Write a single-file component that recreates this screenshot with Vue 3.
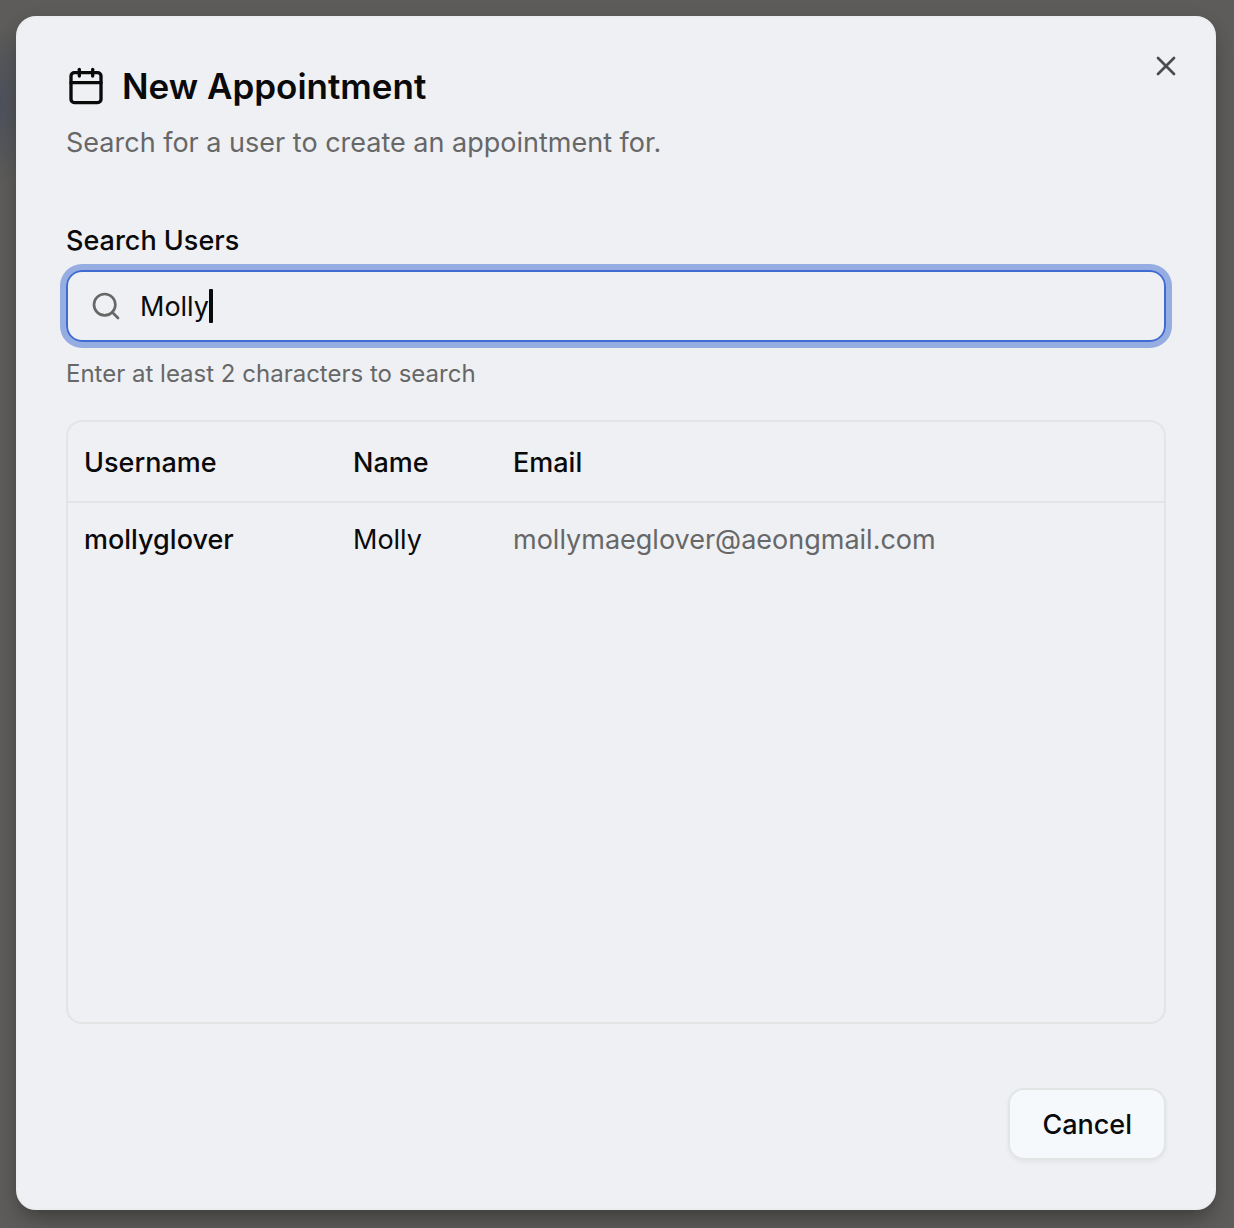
<template>
    <main class="overlay">
        <section class="dialog" role="dialog" aria-labelledby="dialog-title">
            <button type="button" class="close-button" aria-label="Close">
                <svg class="icon" viewBox="0 0 24 24">
                    <path d="M18 6 6 18" />
                    <path d="m6 6 12 12" />
                </svg>
            </button>

            <header class="dialog-header">
                <h2 id="dialog-title" class="dialog-title">
                    <svg class="icon icon-large" viewBox="0 0 24 24">
                        <path d="M8 2v4" />
                        <path d="M16 2v4" />
                        <rect x="3" y="4" width="18" height="18" rx="2" />
                        <path d="M3 10h18" />
                    </svg>
                    <span>New Appointment</span>
                </h2>
                <p class="dialog-description">Search for a user to create an appointment for.</p>
            </header>

            <div class="field">
                <label class="field-label" for="user-search">Search Users</label>
                <div class="search-box" @click="searchInput.focus()">
                    <svg class="icon" viewBox="0 0 24 24">
                        <circle cx="11" cy="11" r="8" />
                        <path d="m21 21-4.3-4.3" />
                    </svg>
                    <div class="search-value">
                        <input id="user-search" ref="searchInput" v-model="query" class="search-input" type="text" autocomplete="off" spellcheck="false">
                        <span class="caret"></span>
                    </div>
                </div>
                <p class="field-hint">Enter at least 2 characters to search</p>
            </div>

            <div class="results">
                <table class="results-table">
                    <thead>
                        <tr>
                            <th class="col-username">Username</th>
                            <th class="col-name">Name</th>
                            <th>Email</th>
                        </tr>
                    </thead>
                    <tbody>
                        <tr v-for="user in filteredUsers" :key="user.username">
                            <td class="username">{{ user.username }}</td>
                            <td>{{ user.name }}</td>
                            <td class="email">{{ user.email }}</td>
                        </tr>
                    </tbody>
                </table>
            </div>

            <footer class="dialog-footer">
                <button type="button" class="cancel-button">Cancel</button>
            </footer>
        </section>
    </main>
</template>

<script setup>
import { computed, ref } from 'vue'

const query = ref('Molly')
const searchInput = ref(null)
const users = [
    { username: 'mollyglover', name: 'Molly', email: 'mollymaeglover@aeongmail.com' }
]

const filteredUsers = computed(() => {
    const term = query.value.trim().toLowerCase()
    if (term.length < 2) return []
    return users.filter(user => `${user.username} ${user.name} ${user.email}`.toLowerCase().includes(term))
})
</script>

<style>
html {
    min-height: 100%;
    background: radial-gradient(ellipse 40px 80px at 0 104px, #4d515c, transparent) no-repeat #5d5c5a;
}
</style>

<style scoped>
* {
    box-sizing: border-box;
}

.overlay {
    padding: 16px 18px 18px 16px;
    font-family: Inter, "Liberation Sans", sans-serif;
    font-size: 27px;
    line-height: 42px;
    color: #0a0a0a;
}

.dialog {
    position: relative;
    display: flex;
    flex-direction: column;
    padding: 48px;
    border: 2px solid #ebedef;
    border-radius: 20px;
    background: #eef0f4;
    box-shadow: 0 16px 24px -8px rgba(0, 0, 0, 0.25), 0 4px 16px rgba(0, 0, 0, 0.15);
}

.icon {
    display: block;
    flex: none;
    width: 32px;
    height: 32px;
    fill: none;
    stroke: currentColor;
    stroke-width: 2;
    stroke-linecap: round;
    stroke-linejoin: round;
}

.icon-large {
    width: 40px;
    height: 40px;
}

.close-button {
    position: absolute;
    top: 32px;
    right: 32px;
    padding: 0;
    border: 0;
    background: none;
    color: #4a4b4d;
}

.dialog-header {
    display: flex;
    flex-direction: column;
    gap: 16px;
}

.dialog-title {
    display: flex;
    align-items: center;
    gap: 16px;
    margin: 0;
    font-size: 35px;
    font-weight: 600;
    line-height: 40px;
}

.dialog-description {
    margin: 0;
    color: #676767;
}

.field {
    margin-top: 56px;
}

.field-label {
    display: block;
    font-weight: 500;
}

.search-box {
    display: flex;
    align-items: center;
    gap: 18px;
    height: 72px;
    margin-top: 8px;
    padding: 0 22px;
    border: 2px solid #3f6bd3;
    border-radius: 16px;
    box-shadow: 0 0 0 6px #96ade1;
    color: #676767;
    cursor: text;
}

.search-value {
    display: flex;
    align-items: center;
    min-width: 0;
}

.search-input {
    field-sizing: content;
    min-width: 0;
    padding: 2px 0 0;
    border: 0;
    outline: 0;
    background: none;
    font: inherit;
    color: #0a0a0a;
    caret-color: transparent;
}

.caret {
    flex: none;
    width: 4px;
    height: 34px;
    border-radius: 1px;
    background: #0a0a0a;
}

.field-hint {
    margin: 16px 0 0;
    font-size: 24px;
    line-height: 32px;
    color: #676767;
}

.results {
    height: 604px;
    margin-top: 30px;
    overflow: auto;
    border: 2px solid #e3e4e4;
    border-radius: 16px;
}

.results-table {
    width: 100%;
    border-collapse: collapse;
    text-align: left;
}

.results-table th {
    height: 80px;
    padding: 2px 16px 0;
    border-bottom: 2px solid #e3e4e4;
    font-weight: 500;
}

.results-table td {
    padding: 16px;
}

.col-username {
    width: 269px;
}

.col-name {
    width: 160px;
}

.username {
    font-weight: 500;
}

.email {
    color: #676767;
}

.dialog-footer {
    display: flex;
    justify-content: flex-end;
    margin-top: 64px;
}

.cancel-button {
    height: 72px;
    padding: 2px 32px 0;
    border: 2px solid #e3e4e4;
    border-radius: 16px;
    background: #f6f9fb;
    box-shadow: 0 2px 4px rgba(0, 0, 0, 0.05);
    font: inherit;
    font-weight: 500;
    color: #0a0a0a;
}
</style>
